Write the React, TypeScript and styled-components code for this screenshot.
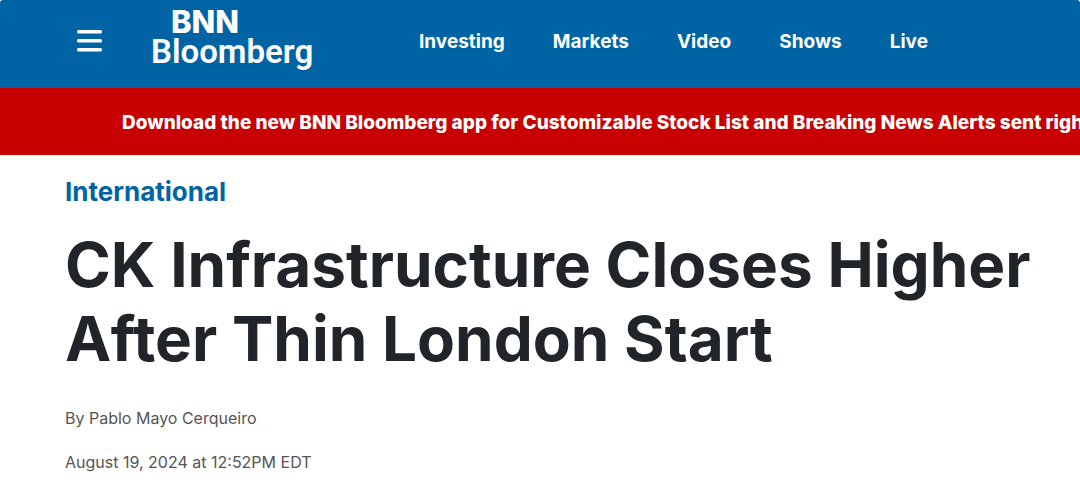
import React from "react";
import styled, { createGlobalStyle } from "styled-components";

const Global = createGlobalStyle`
  * { box-sizing: border-box; }
  body { margin: 0; background: #fff; font-family: Inter, "Liberation Sans", sans-serif; color: #212529; overflow-x: hidden; }
`;
const Header = styled.header`
  display: flex; align-items: center; height: 88px; padding: 0 76px 6px;
  background: #0064a4; border-radius: 3px 3px 0 0;
`;
const MenuButton = styled.button`
  display: flex; padding: 0; margin-right: 48px; border: 0; background: none; color: #fff;
`;
const Brand = styled.a`
  display: flex; flex-direction: column; width: 164px; padding-bottom: 6px; color: #fff; text-decoration: none;
  font-family: Roboto, sans-serif; font-weight: 600; font-size: 33px; line-height: 32px;
`;
const BrandTop = styled.span`
  padding-left: 20px; font-family: Inter, sans-serif; font-size: 31px; font-weight: 800; line-height: 28px;
`;
const Nav = styled.nav`
  display: flex; gap: 48px; padding-top: 2px; margin-left: 104px;
`;
const NavLink = styled.a`
  color: #fff; font-size: 19px; font-weight: 700; line-height: 24px; text-decoration: none; white-space: nowrap;
`;
const Alert = styled.aside`
  padding: 22px 0 19px 122px; background: #c80000; color: #fff; overflow: hidden; white-space: nowrap;
  font-size: 19px; font-weight: 800; line-height: 26px;
`;
const Article = styled.article`
  padding: 20px 40px 0 65px;
`;
const Section = styled.a`
  display: block; color: #0064a4; font-size: 26px; font-weight: 700; line-height: 34px; text-decoration: none;
`;
const Headline = styled.h1`
  margin: 19px 0 30px; font-size: 62px; font-weight: 700; line-height: 74px;
`;
const Meta = styled.p`
  margin: 0 0 20px; color: #555; font-size: 16px; line-height: 24px;
`;

export default function App() {
  return (
    <>
      <Global />
      <Header>
        <MenuButton aria-label="Open menu">
          <svg width="27" height="24" viewBox="0 0 27 24" fill="currentColor">
            <rect x="1" y="1" width="25" height="3.5" rx="1.5" />
            <rect x="1" y="10" width="25" height="3.5" rx="1.5" />
            <rect x="1" y="19" width="25" height="3.5" rx="1.5" />
          </svg>
        </MenuButton>
        <Brand href="#"><BrandTop>BNN</BrandTop>Bloomberg</Brand>
        <Nav>
          {["Investing", "Markets", "Video", "Shows", "Live"].map((name) => (
            <NavLink key={name} href="#">{name}</NavLink>
          ))}
        </Nav>
      </Header>
      <Alert>Download the new BNN Bloomberg app for Customizable Stock List and Breaking News Alerts sent right</Alert>
      <Article>
        <Section href="#">International</Section>
        <Headline>CK Infrastructure Closes Higher After Thin London Start</Headline>
        <Meta>By Pablo Mayo Cerqueiro</Meta>
        <Meta>August 19, 2024 at 12:52PM EDT</Meta>
      </Article>
    </>
  );
}
